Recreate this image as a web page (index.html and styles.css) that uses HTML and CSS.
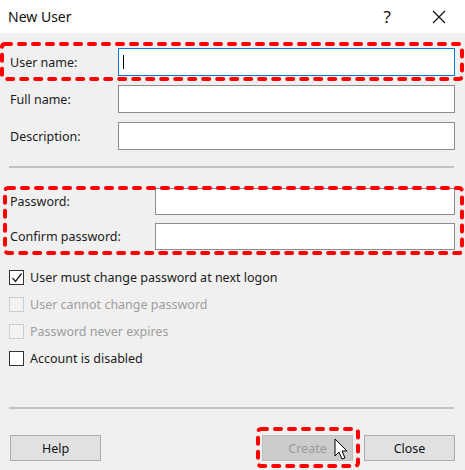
FILE: index.html
```html
<!DOCTYPE html>
<html lang="en">
<head>
    <meta charset="UTF-8">
    <title>New User</title>
    <link rel="stylesheet" href="styles.css">
</head>
<body>
    <div class="dialog">
        <header class="titlebar">
            <span class="title">New User</span>
            <span class="help">?</span>
            <svg class="close" width="14" height="14" viewBox="0 0 14 14">
                <path d="M1 1 L13 13 M13 1 L1 13" stroke="#111" stroke-width="1.2" fill="none"/>
            </svg>
        </header>

        <main class="form">
            <div class="fields top">
                <label>User name:</label>
                <div class="input focused"><span class="caret"></span></div>
                <label>Full name:</label>
                <div class="input"></div>
                <label>Description:</label>
                <div class="input"></div>
            </div>

            <div class="sep"></div>

            <div class="fields pw">
                <label>Password:</label>
                <div class="input"></div>
                <label>Confirm password:</label>
                <div class="input"></div>
            </div>

            <ul class="checks">
                <li>
                    <span class="box">
                        <svg width="12" height="12" viewBox="0 0 12 12"><path d="M1.5 6 L4.5 9.5 L10.5 1.5" stroke="#222" stroke-width="1.3" fill="none"/></svg>
                    </span>
                    User must change password at next logon
                </li>
                <li class="disabled"><span class="box"></span>User cannot change password</li>
                <li class="disabled"><span class="box"></span>Password never expires</li>
                <li><span class="box"></span>Account is disabled</li>
            </ul>

            <div class="sep"></div>

            <div class="buttons">
                <button class="btn">Help</button>
                <button class="btn create" disabled>Create</button>
                <button class="btn">Close</button>
            </div>
        </main>

        <!-- red annotation marks drawn over the dialog -->
        <svg class="mark mark-user" width="464" height="39">
            <rect x="2" y="2" width="460" height="35" rx="3"/>
        </svg>
        <svg class="mark mark-pw" width="462" height="70">
            <rect x="2" y="2" width="457" height="65" rx="3"/>
        </svg>
        <svg class="mark mark-create" width="105" height="42">
            <rect x="2" y="2" width="100" height="37" rx="3"/>
        </svg>

        <svg class="pointer" width="14" height="23" viewBox="0 0 14 23">
            <path d="M1 1 L1 18 L5 14 L8 21 L11 20 L8 13 L13 13 Z" fill="#fff" stroke="#000" stroke-width="1" stroke-linejoin="round"/>
        </svg>
    </div>
</body>
</html>
```

FILE: styles.css
```css
body {
    margin: 0;
    font-family: "Noto Sans", "Liberation Sans", Arial, sans-serif;
    font-size: 12.5px;
    color: #1a1a1a;
    background-color: #f0f0f0;
}

.dialog {
    position: relative;
    width: 465px;
    height: 470px;
    overflow: hidden;
    background-color: #f0f0f0;
}

.titlebar {
    height: 33px;
    display: flex;
    align-items: center;
    background-color: #fff;
    padding-left: 8px;
}

.title {
    flex: 1;
    font-size: 14px;
    color: #111;
}

.help {
    font-size: 17px;
    color: #111;
    margin-right: 41px;
}

.close {
    margin-right: 19px;
}

.form {
    padding: 15px 10px 0 10px;
}

.fields {
    display: grid;
    align-items: center;
}

.fields.top {
    grid-template-columns: 108px 1fr;
    row-gap: 9px;
}

.fields.top .input {
    height: 28px;
}

.fields.pw {
    grid-template-columns: 145px 1fr;
    row-gap: 8px;
    margin-top: 20px;
}

.fields.pw .input {
    height: 27px;
}

.input {
    box-sizing: border-box;
    background-color: #fff;
    border: 1px solid #8c8c8c;
    display: flex;
    align-items: center;
}

.input.focused {
    border-color: #0078d7;
}

.caret {
    width: 1px;
    height: 14px;
    margin-left: 4px;
    background-color: #000;
}

.sep {
    height: 2px;
    margin-left: -1px;
    margin-right: 1px;
    background-color: #c2c2c2;
}

.fields.top + .sep {
    margin-top: 16px;
}

.checks {
    list-style: none;
    margin: 14px 0 35px 0;
    padding: 0;
}

.checks li {
    height: 27px;
    display: flex;
    align-items: center;
    gap: 6px;
    margin-left: -1px;
}

.box {
    box-sizing: border-box;
    width: 15px;
    height: 15px;
    border: 1px solid #333;
    background-color: #fff;
    display: flex;
    align-items: center;
    justify-content: center;
}

.checks li.disabled {
    color: #9d9d9d;
}

.checks li.disabled .box {
    border-color: #cdcdcd;
    background-color: #f3f3f3;
}

.buttons {
    display: flex;
    margin-top: 26px;
}

.btn {
    box-sizing: border-box;
    width: 91px;
    height: 26px;
    font-family: inherit;
    font-size: 12.5px;
    color: #111;
    background-color: #e1e1e1;
    border: 1px solid #adadad;
    padding: 0;
}

.btn.create {
    margin-left: auto;
    margin-right: 11px;
    background-color: #cccccc;
    border-color: #bfbfbf;
    color: #9a9a9a;
}

.mark {
    position: absolute;
}

.mark rect {
    fill: none;
    stroke: #f00;
    stroke-width: 4;
    stroke-dasharray: 6 8;
    stroke-linecap: round;
}

.mark-user {
    left: 0;
    top: 42px;
}

.mark-pw {
    left: 3px;
    top: 186px;
}

.mark-create {
    left: 256px;
    top: 427px;
}

.pointer {
    position: absolute;
    left: 334px;
    top: 438px;
}
```
